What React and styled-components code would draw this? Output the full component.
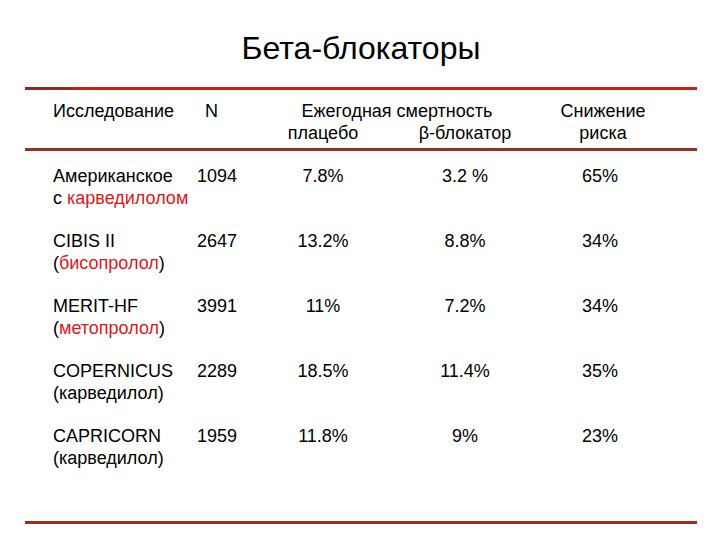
import React from 'react';
import styled, { createGlobalStyle } from 'styled-components';

const GlobalStyle = createGlobalStyle`
  html, body {
    margin: 0;
    padding: 0;
    background: #fff;
  }
  body {
    font-family: "Liberation Sans", Arial, sans-serif;
    color: #000;
  }
`;

const columns = '144px 58px 136px 148px 122px';

const StyledSlide = styled.div`
  width: 720px;
  height: 540px;
  box-sizing: border-box;
  padding: 30px 23px 0 25px;
  display: flex;
  flex-direction: column;
`;

const StyledTitle = styled.h1`
  margin: 0;
  font-size: 32px;
  line-height: 36px;
  font-weight: normal;
  text-align: center;
`;

const StyledRule = styled.div`
  height: 3px;
  margin-top: ${({ gap }) => gap}px;
  background: ${({ tone }) =>
    tone === 'bright'
      ? 'linear-gradient(to right, #8e2a26 0, #8e2a26 40px, #dc1719 60px, #dc1719 100%)'
      : '#9a2f24'};
`;

const StyledHeader = styled.div`
  display: grid;
  grid-template-columns: ${columns};
  grid-template-rows: 22px 22px;
  margin-top: 10px;
  padding-left: 28px;
  font-size: 18px;
  line-height: 22px;
`;

const StyledHeadCell = styled.div`
  grid-column: ${({ col }) => col};
  grid-row: ${({ row }) => row};
  text-align: ${({ align }) => align || 'center'};
  padding-left: ${({ indent }) => indent || 0}px;
  white-space: nowrap;
`;

const StyledBody = styled.div`
  display: flex;
  flex-direction: column;
  gap: 21px;
  margin-top: 14px;
  margin-bottom: 52px;
  padding-left: 28px;
`;

const StyledRow = styled.div`
  display: grid;
  grid-template-columns: ${columns};
  font-size: 18px;
  line-height: 22px;
  height: 44px;
`;

const StyledStudy = styled.div`
  white-space: nowrap;
`;

const StyledCell = styled.div`
  text-align: ${({ align }) => align || 'center'};
  white-space: nowrap;
`;

const StyledDrug = styled.span`
  color: #e0161b;
`;

const studies = [
  { name: 'Американское', pre: 'с ', drug: 'карведилолом', post: '', n: '1094', placebo: '7.8%', beta: '3.2 %', risk: '65%' },
  { name: 'CIBIS II', pre: '(', drug: 'бисопролол', post: ')', n: '2647', placebo: '13.2%', beta: '8.8%', risk: '34%' },
  { name: 'MERIT-HF', pre: '(', drug: 'метопролол', post: ')', n: '3991', placebo: '11%', beta: '7.2%', risk: '34%' },
  { name: 'COPERNICUS', plain: '(карведилол)', n: '2289', placebo: '18.5%', beta: '11.4%', risk: '35%' },
  { name: 'CAPRICORN', plain: '(карведилол)', n: '1959', placebo: '11.8%', beta: '9%', risk: '23%' },
];

const App = () => (
  <>
    <GlobalStyle />
    <StyledSlide>
      <StyledTitle>Бета-блокаторы</StyledTitle>
      <StyledRule tone="bright" gap={21} />
      <StyledHeader>
        <StyledHeadCell col="1" row="1" align="left">Исследование</StyledHeadCell>
        <StyledHeadCell col="2" row="1" align="left" indent={8}>N</StyledHeadCell>
        <StyledHeadCell col="3 / span 2" row="1">Ежегодная смертность</StyledHeadCell>
        <StyledHeadCell col="3" row="2">плацебо</StyledHeadCell>
        <StyledHeadCell col="4" row="2">β-блокатор</StyledHeadCell>
        <StyledHeadCell col="5" row="1" indent={6}>Снижение</StyledHeadCell>
        <StyledHeadCell col="5" row="2" indent={6}>риска</StyledHeadCell>
      </StyledHeader>
      <StyledRule tone="dark" gap={4} />
      <StyledBody>
        {studies.map(study => (
          <StyledRow key={study.name}>
            <StyledStudy>
              {study.name}
              <br />
              {study.plain ? study.plain : (
                <>
                  {study.pre}
                  <StyledDrug>{study.drug}</StyledDrug>
                  {study.post}
                </>
              )}
            </StyledStudy>
            <StyledCell align="left">{study.n}</StyledCell>
            <StyledCell>{study.placebo}</StyledCell>
            <StyledCell>{study.beta}</StyledCell>
            <StyledCell>{study.risk}</StyledCell>
          </StyledRow>
        ))}
      </StyledBody>
      <StyledRule tone="dark" gap={0} />
    </StyledSlide>
  </>
);

export default App;
